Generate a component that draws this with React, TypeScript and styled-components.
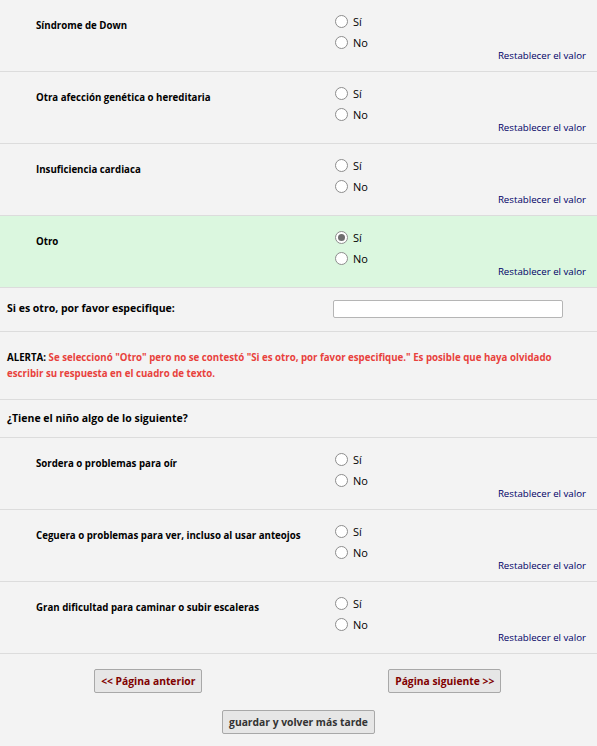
import styled, { createGlobalStyle } from "styled-components";

const GlobalStyle = createGlobalStyle`
    html, body {
        margin: 0;
        padding: 0;
        background: #f3f3f3;
    }
    body {
        font-family: "Open Sans", "Liberation Sans", Arial, sans-serif;
        color: #000;
    }
`;

interface RowProps {
    highlight?: boolean,
}

const Page = styled.div`
    width: 597px;
    background: #f3f3f3;
`;

const MatrixRow = styled.div<RowProps>`
    display: grid;
    grid-template-columns: 335px 1fr;
    height: 71px;
    border-bottom: 1px solid #dcdcdc;
    background: ${props => props.highlight ? '#dbf7df' : '#f3f3f3'};
`;

const SubLabel = styled.div`
    padding: 19px 0 0 36px;
    font-size: 9.7px;
    font-weight: 700;
    line-height: 13px;
`;

const Choices = styled.div`
    display: flex;
    flex-direction: column;
    padding-top: 11.5px;
    padding-right: 11px;
`;

const Choice = styled.label`
    display: flex;
    align-items: center;
    height: 20.5px;
    font-size: 11px;
    cursor: pointer;
`;

const Circle = styled.span<{ checked?: boolean }>`
    box-sizing: border-box;
    width: 13px;
    height: 13px;
    border-radius: 50%;
    border: 1px solid #8d8d8d;
    background: #fff;
    margin-right: 5px;
    display: flex;
    align-items: center;
    justify-content: center;
    &::after {
        content: "";
        display: ${props => props.checked ? 'block' : 'none'};
        width: 7px;
        height: 7px;
        border-radius: 50%;
        background: #6e6e6e;
    }
`;

const Reset = styled.a`
    align-self: flex-end;
    margin-top: -3px;
    font-size: 9.7px;
    line-height: 12px;
    color: #000066;
    text-decoration: none;
`;

const FieldRow = styled.div`
    box-sizing: border-box;
    display: grid;
    grid-template-columns: 333px 230px;
    align-items: start;
    height: 44px;
    padding-top: 12px;
    border-bottom: 1px solid #dcdcdc;
`;

const FieldLabel = styled.div`
    padding-left: 7px;
    font-size: 10.5px;
    font-weight: 700;
    line-height: 16px;
`;

const TextInput = styled.input`
    box-sizing: border-box;
    width: 230px;
    height: 18px;
    border: 1px solid #b5b5b5;
    border-radius: 2px;
    background: #fff;
    margin: 0;
`;

const AlertRow = styled.div`
    box-sizing: border-box;
    height: 68px;
    padding: 18px 20px 0 7px;
    border-bottom: 1px solid #dcdcdc;
    font-size: 9.7px;
    font-weight: 700;
    line-height: 16px;
    color: #e8413c;
`;

const AlertTag = styled.span`
    color: #000;
`;

const HeaderRow = styled.div`
    box-sizing: border-box;
    display: flex;
    align-items: center;
    height: 38px;
    padding: 0 0 2px 7px;
    border-bottom: 1px solid #dcdcdc;
    font-size: 10.5px;
    font-weight: 700;
`;

const NavRow = styled.div`
    display: grid;
    grid-template-columns: 1fr 1fr;
    padding: 15px 4px 0 0;
`;

const NavCell = styled.div`
    display: flex;
    justify-content: center;
`;

const SaveRow = styled.div`
    display: flex;
    justify-content: center;
    padding-top: 17px;
    padding-bottom: 12px;
`;

const Button = styled.button<{ tone?: string }>`
    height: 24px;
    padding: 0 6px;
    border: 1px solid #a8a8a8;
    border-radius: 2px;
    background: #e6e6e6;
    font-family: "Open Sans", "Liberation Sans", Arial, sans-serif;
    font-size: 10.3px;
    font-weight: 700;
    color: ${props => props.tone || '#800000'};
    cursor: pointer;
`;

interface QuestionProps {
    label: string,
    checked?: string,
    highlight?: boolean,
}

const Question = ({ label, checked, highlight }: QuestionProps) => {
    return (
        <MatrixRow highlight={highlight}>
            <SubLabel>{label}</SubLabel>
            <Choices>
                <Choice><Circle checked={checked === 'si'} />Sí</Choice>
                <Choice><Circle checked={checked === 'no'} />No</Choice>
                <Reset href="#">Restablecer el valor</Reset>
            </Choices>
        </MatrixRow>
    );
}

const App = () => {
    return (
        <Page>
            <GlobalStyle />
            <Question label="Síndrome de Down" />
            <Question label="Otra afección genética o hereditaria" />
            <Question label="Insuficiencia cardiaca" />
            <Question label="Otro" checked="si" highlight />
            <FieldRow>
                <FieldLabel>Si es otro, por favor especifique:</FieldLabel>
                <TextInput type="text" />
            </FieldRow>
            <AlertRow>
                <AlertTag>ALERTA:</AlertTag>{' '}
                Se seleccionó "Otro" pero no se contestó "Si es otro, por favor especifique." Es posible que haya olvidado escribir su respuesta en el cuadro de texto.
            </AlertRow>
            <HeaderRow>¿Tiene el niño algo de lo siguiente?</HeaderRow>
            <Question label="Sordera o problemas para oír" />
            <Question label="Ceguera o problemas para ver, incluso al usar anteojos" />
            <Question label="Gran dificultad para caminar o subir escaleras" />
            <NavRow>
                <NavCell><Button>&lt;&lt; Página anterior</Button></NavCell>
                <NavCell><Button>Página siguiente &gt;&gt;</Button></NavCell>
            </NavRow>
            <SaveRow>
                <Button tone="#333">guardar y volver más tarde</Button>
            </SaveRow>
        </Page>
    );
}

export default App
